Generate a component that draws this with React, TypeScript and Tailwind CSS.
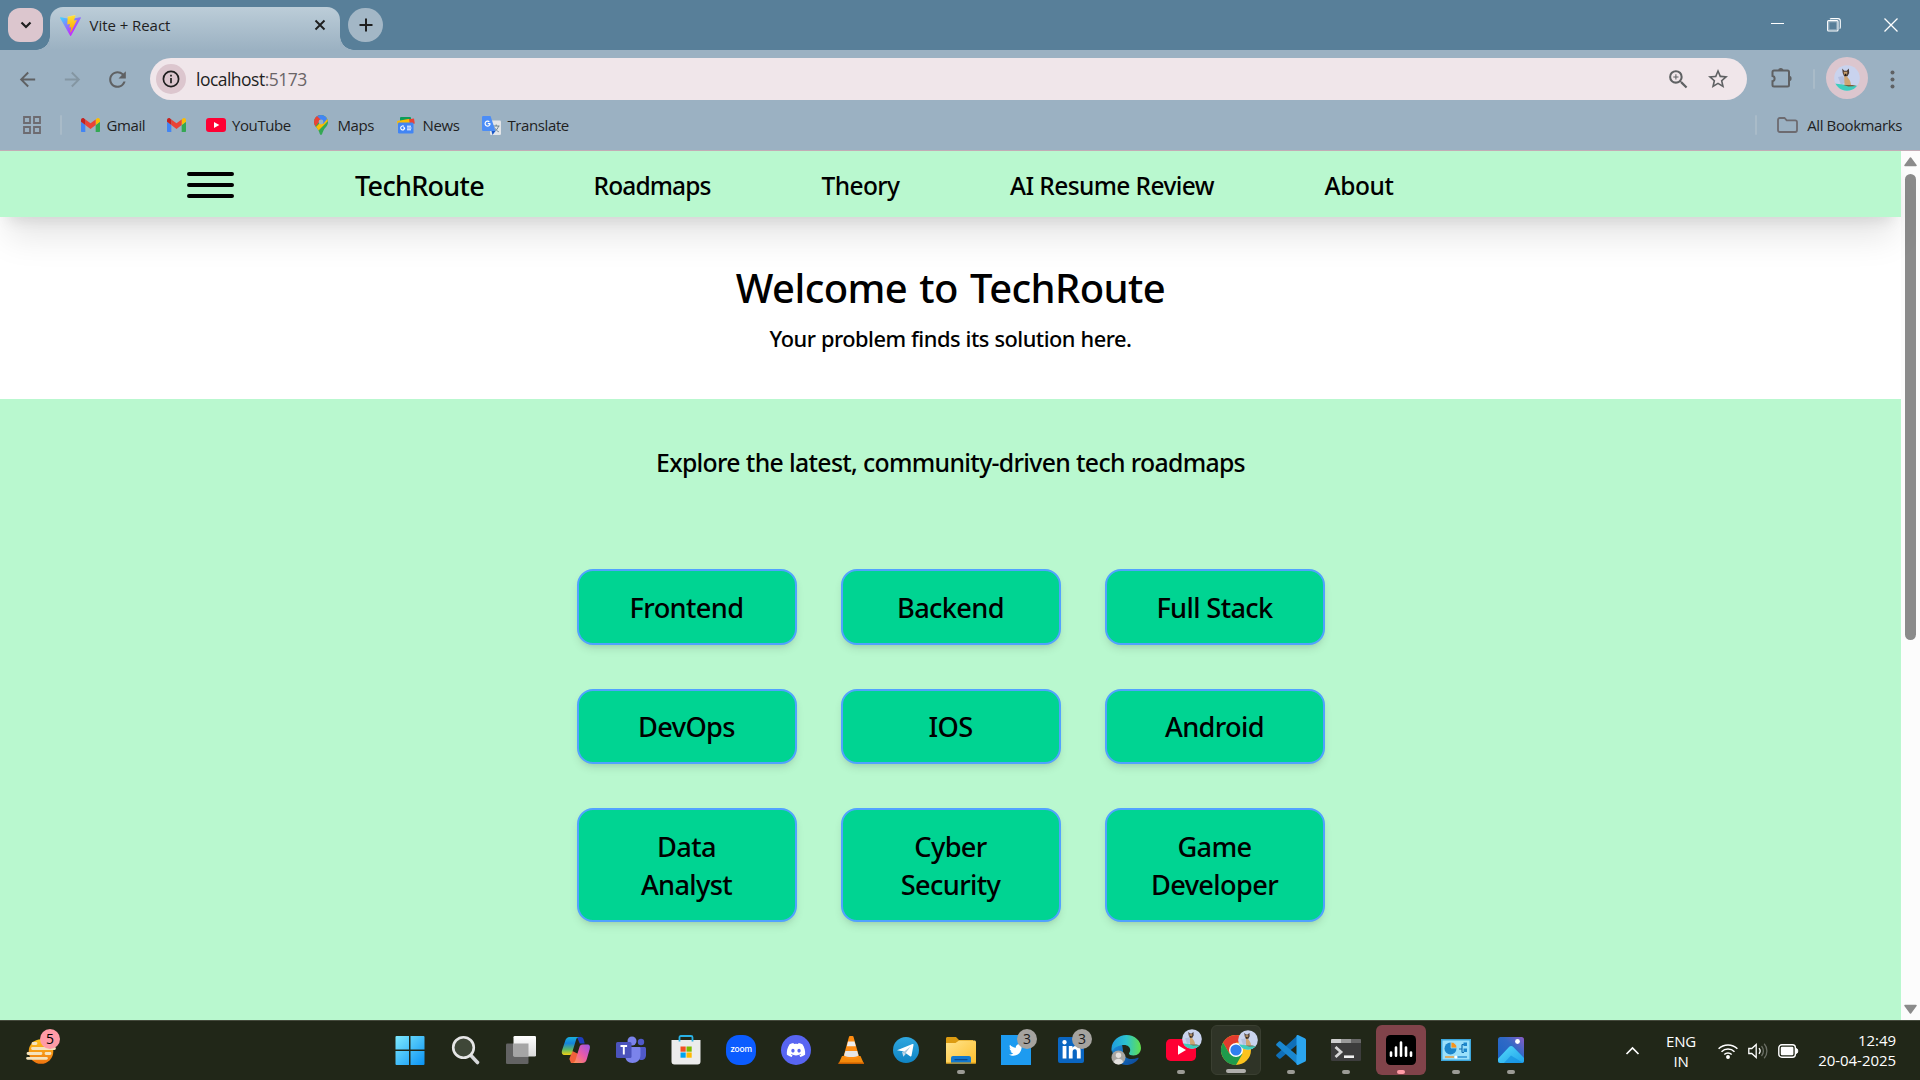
import React from 'react';
import { FaDiscord, FaTwitter, FaLinkedinIn } from 'react-icons/fa';
import { MdArrowBack, MdArrowForward, MdRefresh, MdStarBorder, MdZoomIn } from 'react-icons/md';

/* ---------- browser icons ---------- */

const ViteLogo = () => (
  <svg width="21" height="21" viewBox="0 0 256 257">
    <defs>
      <linearGradient id="viteA" x1="-.8%" x2="57.6%" y1="7.7%" y2="78.4%">
        <stop offset="0%" stopColor="#41D1FF" />
        <stop offset="100%" stopColor="#BD34FE" />
      </linearGradient>
      <linearGradient id="viteB" x1="43.4%" x2="50.3%" y1="2.2%" y2="89%">
        <stop offset="0%" stopColor="#FFEA83" />
        <stop offset="8.3%" stopColor="#FFDD35" />
        <stop offset="100%" stopColor="#FFA800" />
      </linearGradient>
    </defs>
    <path fill="url(#viteA)" d="M255.153 37.938 134.897 252.976c-2.483 4.44-8.862 4.466-11.382.048L.875 37.958c-2.746-4.814 1.371-10.646 6.827-9.67l120.385 21.517a6.537 6.537 0 0 0 2.322-.004l117.867-21.483c5.438-.991 9.574 4.796 6.877 9.62Z" />
    <path fill="url(#viteB)" d="M185.432.063 96.44 17.501a3.268 3.268 0 0 0-2.634 3.014l-5.474 92.456a3.268 3.268 0 0 0 3.997 3.378l24.777-5.718c2.318-.535 4.413 1.507 3.936 3.838l-7.361 36.047c-.495 2.426 1.782 4.5 4.151 3.78l15.304-4.649c2.372-.72 4.652 1.36 4.15 3.788l-11.698 56.621c-.732 3.542 3.979 5.473 5.943 2.437l1.313-2.028 72.516-144.72c1.215-2.423-.88-5.186-3.54-4.672l-25.505 4.922c-2.396.462-4.435-1.77-3.759-4.114l16.646-57.705c.677-2.35-1.37-4.583-3.769-4.113Z" />
  </svg>
);

const GmailIcon = () => (
  <svg width="19" height="14.5" viewBox="52 42 88 66">
    <path fill="#4285f4" d="M58 108h14V74L52 59v43c0 3.32 2.69 6 6 6" />
    <path fill="#34a853" d="M120 108h14c3.32 0 6-2.69 6-6V59l-20 15" />
    <path fill="#fbbc04" d="M120 48v26l20-15v-8c0-7.42-8.47-11.65-14.4-7.2" />
    <path fill="#ea4335" d="M72 74V48l24 18 24-18v26L96 92" />
    <path fill="#c5221f" d="M52 51v8l20 15V48l-5.600-4.200c-5.940-4.450-14.400-.220-14.400 7.200" />
  </svg>
);

const YouTubeIcon = ({ w = 20, h = 14 }: { w?: number; h?: number }) => (
  <svg width={w} height={h} viewBox="0 0 30 21" preserveAspectRatio="none">
    <rect width="30" height="21" rx="4.500" fill="#ff0033" />
    <path d="M12 6v9l8-4.500z" fill="#fff" />
  </svg>
);

const MapsIcon = () => (
  <svg width="14" height="20" viewBox="0 0 14 20">
    <defs>
      <clipPath id="pin">
        <path d="M7 0a7 7 0 0 1 7 7c0 3.500-2.300 5-4 7.500C8.500 17 8.300 20 7 20s-1.500-3-3-5.500C2.300 12 0 10.500 0 7a7 7 0 0 1 7-7z" />
      </clipPath>
    </defs>
    <g clipPath="url(#pin)">
      <rect width="14" height="20" fill="#34a853" />
      <path d="M0 14 14 0v6L3 17z" fill="#fbbc04" />
      <path d="M0 0h5l3 3-7 9-3-3z" fill="#ea4335" />
      <path d="M3 0h11v3l-5 6-6-6z" fill="#4285f4" />
      <path d="M0 2l2.500-1.500L7 5 1 11z" fill="#ea4335" />
    </g>
    <circle cx="7" cy="7" r="2.400" fill="#9bb1c2" />
  </svg>
);

const NewsIcon = () => (
  <svg width="18" height="17" viewBox="0 0 18 17">
    <rect x="3" y="0" width="11" height="8" rx="1" fill="#0c9d58" />
    <path d="M6 3l11-1.500.8 5-10 2z" fill="#ea4335" />
    <path d="M0 4l12-2 1 6-12 1z" fill="#fbbc04" />
    <rect x="1" y="5.500" width="15.500" height="11" rx="1.300" fill="#4285f4" />
    <path d="M8 10.900H6.200M7.700 11a2 2 0 1 1-.7-1.600" stroke="#fff" strokeWidth="1.100" fill="none" />
    <path d="M10 9.200h4M10 11h4.500M10 12.800h4" stroke="#fff" strokeWidth="1" />
  </svg>
);

const TranslateIcon = () => (
  <svg width="19" height="19" viewBox="0 0 19 19">
    <rect x="8" y="4.500" width="11" height="14.500" rx="1.300" fill="#e3e5e8" />
    <path d="M11 10h6.500M14.200 8.500V10M16.500 10c-.5 2.500-2.500 4.500-4 5.500M12.500 11.500c1 2 2.500 3.500 4.300 4.300" stroke="#6f8590" strokeWidth="1" fill="none" />
    <path d="M9.500 15h4L10.500 19z" fill="#1a56c4" />
    <path d="M1.300 0h7.200L13.500 15H1.300A1.300 1.300 0 0 1 0 13.700V1.300A1.300 1.300 0 0 1 1.300 0z" fill="#4c8df6" />
    <path d="M8.400 7.700H5.800M8.100 7.700a2.500 2.500 0 1 1-.8-1.900" stroke="#fff" strokeWidth="1.200" fill="none" />
  </svg>
);

const DogAvatar = ({ size }: { size: number }) => (
  <svg width={size} height={size} viewBox="0 0 26 26">
    <defs>
      <clipPath id="dogClip">
        <circle cx="13" cy="13" r="12.800" />
      </clipPath>
    </defs>
    <g clipPath="url(#dogClip)">
      <rect width="26" height="26" fill="#c9d3ee" />
      <path d="M4 12l5-1 3 6-5 3z" fill="#b2bfe0" />
      <path d="M0 18.500l13 1.500 13 1v5H0z" fill="#3ecdbd" />
      <path d="M8.200 3.500l2 2.300h2.600l2-2.300.4 4.500-1.700 3.300h-3.400L8.700 8z" fill="#4a3b34" />
      <path d="M9.600 6.800h3.800l-.5 3.400h-2.800z" fill="#c9a06c" />
      <path d="M10.600 8.800h1.900v3h-1.900z" fill="#211a18" />
      <path d="M10.200 11.300h2.600c1.600 2.200 4 4.200 4.200 8.700h-6.500z" fill="#cfa673" />
      <path d="M9.500 20h9l4 1-8 .5z" fill="#7d5c3c" />
    </g>
  </svg>
);

/* ---------- taskbar icons, drawn on a 30x30 box ---------- */

const Box = ({ children }: { children: React.ReactNode }) => (
  <svg width="30" height="30" viewBox="0 0 30 30" className="overflow-visible">{children}</svg>
);

const StartIcon = () => (
  <Box>
    <defs>
      <linearGradient id="win" x1="0" y1="0" x2="1" y2="1" gradientUnits="objectBoundingBox">
        <stop offset="0" stopColor="#7ee9fd" />
        <stop offset="1" stopColor="#0a93f5" />
      </linearGradient>
    </defs>
    <path transform="translate(-1.500 0)" d="M1 2a1 1 0 0 1 1-1h12.500v13.500H1zM16 1h13a1 1 0 0 1 1 1v12.500H16zM1 16h13.500v14H2a1 1 0 0 1-1-1zM16 16h14v13a1 1 0 0 1-1 1H16z" fill="url(#win)" />
  </Box>
);
const SearchIcon = () => (
  <Box>
    <path d="M19.500 20l7 7.500" stroke="#d6d8da" strokeWidth="3.600" strokeLinecap="round" />
    <circle cx="12.500" cy="12.500" r="10.300" fill="#3f4738" stroke="#e6e6e6" strokeWidth="2.600" />
  </Box>
);
const TaskViewIcon = () => (
  <Box>
    <defs>
      <linearGradient id="tv" x1="0" y1="0" x2="0" y2="1">
        <stop offset="0" stopColor="#fff" />
        <stop offset="1" stopColor="#d9d9d9" />
      </linearGradient>
    </defs>
    <rect x="0" y="8.500" width="22.500" height="20.500" rx="1.300" fill="#636363" />
    <rect x="7.500" y="1" width="22.500" height="20.500" rx="1.300" fill="url(#tv)" />
    <rect x="7.500" y="8.500" width="15" height="13" fill="#a5a5a5" />
  </Box>
);
const CopilotIcon = () => (
  <Box>
    <defs>
      <linearGradient id="cpA" x1="0" y1="0" x2="0" y2="1">
        <stop offset="0" stopColor="#18b0dc" />
        <stop offset=".35" stopColor="#1583dd" />
        <stop offset=".7" stopColor="#5fb865" />
        <stop offset="1" stopColor="#f4d012" />
      </linearGradient>
      <linearGradient id="cpB" x1="1" y1="0" x2="0" y2="1">
        <stop offset="0" stopColor="#9a55e8" />
        <stop offset=".5" stopColor="#ea5aa8" />
        <stop offset="1" stopColor="#ff9c4a" />
      </linearGradient>
    </defs>
    <path d="M16 2h3.500c2 0 2.800 1.200 3.300 3l.9 3.500h-5z" fill="#1f3fc0" />
    <path d="M10 28h2.500c2 0 2.800-1 3.300-3l1.500-6-6-3-3 8z" fill="#f0603a" />
    <path d="M9 2h9c-2 .3-2.600 1.700-3 3l-4 13c-.4 1.500-1.300 2-3 2H4c-3 0-3.600-2-3-4.500L4 6.500C4.800 3.500 6 2 9 2z" fill="url(#cpA)" />
    <path d="M21 28h-9.500c2-.3 2.600-1.700 3-3l4-13c.4-1.500 1.300-2.500 3-2.500H26c3 0 3.300 2 2.700 4.500L26 23.500c-.8 3-2 4.500-5 4.500z" fill="url(#cpB)" />
  </Box>
);
const TeamsIcon = () => (
  <Box>
    <circle cx="25" cy="7" r="3.200" fill="#5059c9" />
    <path d="M21 12h7.500c.8 0 1.500.7 1.500 1.500V20c0 3-2 5-4.500 5S21 23 21 20z" fill="#5059c9" />
    <circle cx="16" cy="6" r="4.500" fill="#7b83eb" />
    <path d="M9 12h14c.8 0 1.500.7 1.500 1.500V20c0 5-3.500 8-8 8s-7.500-3-7.500-8z" fill="#7b83eb" />
    <rect x="0" y="7" width="15.500" height="16" rx="1.500" fill="#4b53bc" />
    <path d="M4.500 11h6.600M7.800 11v8.500" stroke="#fff" strokeWidth="1.900" />
  </Box>
);
const StoreIcon = () => (
  <Box>
    <path d="M.5 5h29v21.500a3 3 0 0 1-3 3h-23a3 3 0 0 1-3-3z" fill="#ececec" />
    <path d="M8.500 6.500V2.500c0-1 .5-1.500 1.500-1.500h10c1 0 1.500.5 1.500 1.500v4" fill="none" stroke="#29b2e6" strokeWidth="1.800" />
    <path d="M9.500 11.500h5.200v5.200H9.500z" fill="#f25022" />
    <path d="M15.500 11.500h5.200v5.200h-5.200z" fill="#7fba00" />
    <path d="M9.500 17.500h5.200v5.200H9.500z" fill="#00a4ef" />
    <path d="M15.500 17.500h5.200v5.200h-5.200z" fill="#ffb900" />
  </Box>
);
const ZoomAppIcon = () => (
  <div className="flex h-[30px] w-[30px] items-center justify-center rounded-[13px] bg-[#0b5cff]">
    <span className="pb-[2px] font-['Inter'] text-[8.500px] font-medium leading-none tracking-[-0.200px] text-white">zoom</span>
  </div>
);
const DiscordIcon = () => (
  <div className="flex h-[30px] w-[30px] items-center justify-center rounded-full bg-[#5865f2]">
    <FaDiscord className="text-[20px] text-white" />
  </div>
);
const VlcIcon = () => (
  <Box>
    <path d="M6 21h18.500l3.500 8H2.500z" fill="#f58a0b" />
    <path d="M2.500 27.500h25.500v1.500H2.500z" fill="#c85f00" />
    <path d="M14 1h2.500c.6 0 .9.400 1 .8L23 21.500c-3 3.500-12.500 3.500-15.500 0L13 1.800c.1-.4.400-.8 1-.8z" fill="#ff8d12" />
    <path d="M12 6.500h6.500l1.300 4.800h-9z" fill="#eee" />
    <path d="M9.400 16h11.800l1.300 4.500c-3 2-11.400 2-14.400 0z" fill="#e6e6e6" />
  </Box>
);
const TelegramIcon = () => (
  <Box>
    <defs>
      <linearGradient id="tg" x1="0" y1="0" x2="0" y2="1">
        <stop offset="0" stopColor="#2fa7df" />
        <stop offset="1" stopColor="#0f84c4" />
      </linearGradient>
    </defs>
    <circle cx="15" cy="15" r="13" fill="url(#tg)" />
    <path d="M6 15.300 21.500 9c.7-.3 1.200.2 1 .9l-2 10.800c-.2.800-.8 1-1.400.5L12 16.300z" fill="#fff" />
    <path d="M11 16.500l1.300 5.200 2.600-3z" fill="#c8daea" />
    <path d="M12 17.500l7.500-6-5.300 7.200z" fill="#a9c9dd" />
  </Box>
);
const ExplorerIcon = () => (
  <Box>
    <defs>
      <linearGradient id="fe" x1="0" y1="0" x2="1" y2="1">
        <stop offset="0" stopColor="#ffe48c" />
        <stop offset="1" stopColor="#fdbf2d" />
      </linearGradient>
    </defs>
    <path d="M0 3.500C0 2.500.7 2 1.500 2H10l3 3h14v6H0z" fill="#dc9c12" />
    <path d="M0 9.500V8h9.500L13 5.500h15.500c.8 0 1.500.600 1.500 1.500v20.500c0 .600-.500 1-1 1H1c-.600 0-1-.4-1-1z" fill="url(#fe)" />
    <path d="M5 28.500V23a2 2 0 0 1 2-2h16a2 2 0 0 1 2 2v5.500z" fill="#1179cf" />
    <path d="M9 24.600h12" stroke="#0a4a8f" strokeWidth="1.300" strokeLinecap="round" />
    <path d="M0 28h30" stroke="#dfa016" strokeWidth="1" />
  </Box>
);
const TwitterIcon = () => (
  <div className="flex h-[30px] w-[30px] items-center justify-center bg-[#1d9bf0]">
    <FaTwitter className="text-[14px] text-white" />
  </div>
);
const LinkedInIcon = () => (
  <div className="flex h-[26px] w-[26px] items-center justify-center rounded-[2px] bg-[#0a66c2]">
    <FaLinkedinIn className="text-[21px] text-white" />
  </div>
);
const EdgeIcon = () => (
  <Box>
    <defs>
      <linearGradient id="edA" x1="0" y1="0" x2="1" y2="0">
        <stop offset="0" stopColor="#1f9be0" />
        <stop offset=".5" stopColor="#2cc3d0" />
        <stop offset="1" stopColor="#62e04c" />
      </linearGradient>
      <linearGradient id="edB" x1="0" y1="0" x2="1" y2="1">
        <stop offset="0" stopColor="#1b8fdc" />
        <stop offset="1" stopColor="#0c4596" />
      </linearGradient>
    </defs>
    <path d="M2 11C-.5 19 4 29.500 15 30c5.500 0 10-2.500 12.500-6.500.3-.6-.2-1-.7-.7-8 3.500-15.800-.8-14.800-7.300L11 9z" fill="url(#edB)" />
    <path d="M.5 13.500C1 5.500 7.500 0 15.500 0 24 0 30 6 30 13c0 4.500-3.300 7.500-7.500 7.500-3 0-4.500-1-4.500-2 0-.8 1.200-1.300 1.200-3.500 0-2.800-2.500-5-6-5C8 10 3 12 1 17c-.5-1-.6-2.300-.5-3.500z" fill="url(#edA)" />
    <circle cx="7.500" cy="22.500" r="7" fill="#a8a6a2" />
    <circle cx="7.500" cy="20.300" r="2.700" fill="#e4e2df" />
    <path d="M3 27.500c0-5 9-5 9 0-2.500 2.500-6.500 2.500-9 0z" fill="#e4e2df" />
  </Box>
);
const ChromeIcon = () => (
  <Box>
    <circle cx="15" cy="15" r="15" fill="#fcc31e" />
    <path d="M2 7.500A15 15 0 0 1 28 7.500H15L8.500 18.700z" fill="#e33b2e" />
    <path d="M2 7.500A15 15 0 0 0 15 30l6.500-11.200H8.500z" fill="#1f9a4c" />
    <circle cx="15" cy="15" r="7" fill="#fff" />
    <circle cx="15" cy="15" r="5.600" fill="#2f7fee" />
  </Box>
);
const VsCodeIcon = () => (
  <Box>
    <path d="M22 0v9L4.500 23.500c-.5.400-1.200.400-1.600 0L.5 21.200c-.5-.5-.5-1.300 0-1.800z" fill="#0f6fb8" />
    <path d="M22 30v-9L4.500 6.500c-.5-.4-1.200-.4-1.600 0L.5 8.800c-.5.5-.5 1.300 0 1.800z" fill="#1a87d0" />
    <path d="M22 0l6.800 3.200c.8.400 1.200 1 1.200 1.900v19.800c0 .9-.4 1.500-1.200 1.900L22 30c-.9.300-1.500 0-1.500-1V1c0-1 .6-1.300 1.500-1z" fill="#2ba5ef" />
  </Box>
);
const TerminalIcon = () => (
  <Box>
    <rect x="0" y="4" width="30" height="22" rx="1.300" fill="#3d3d3d" />
    <path d="M0 5.300C0 4.500.5 4 1.300 4H10v4H0z" fill="#cfcfcf" />
    <path d="M10 4h10v4H10z" fill="#9a9a9a" />
    <path d="M20 4h8.700c.8 0 1.300.5 1.300 1.300V8H20z" fill="#686868" />
    <path d="M4.500 12l5.500 5-5.500 5" fill="none" stroke="#d6d6d6" strokeWidth="2.800" />
    <path d="M13 21.700h10" stroke="#f2f2f2" strokeWidth="2.600" />
  </Box>
);
const AudioIcon = () => (
  <Box>
    <rect width="30" height="30" rx="4.500" fill="#000" />
    <path d="M5 17.500v3.200M10 12.500v8.200M15 7.500v13.200M20 12.500v8.200M25 17.500v3.200" stroke="#fff" strokeWidth="2.600" strokeLinecap="round" />
  </Box>
);
const ControlPanelIcon = () => (
  <Box>
    <rect x="0" y="4" width="30" height="22" fill="#3da7dc" />
    <rect x="1.500" y="5.500" width="27" height="19" fill="#9be0fb" />
    <circle cx="9.500" cy="13.500" r="6" fill="#1c86cc" />
    <path d="M10 13V7a6 6 0 0 1 6 6z" fill="#f7941d" stroke="#9be0fb" strokeWidth=".8" />
    <path d="M18 14h3M21 9.500v8M21 9.500h2M21 17.500h2" stroke="#136fb0" strokeWidth="1.200" fill="none" />
    <rect x="22.500" y="7.500" width="3.500" height="3.500" fill="#1c86cc" />
    <rect x="22.500" y="13.500" width="3.500" height="3.500" fill="#1c86cc" />
    <path d="M4 22h9" stroke="#f7941d" strokeWidth="1.300" />
    <path d="M16 22h10" stroke="#1c86cc" strokeWidth="1.300" />
    <circle cx="15" cy="22" r="1.600" fill="#fff" />
  </Box>
);
const PhotosIcon = () => (
  <Box>
    <defs>
      <linearGradient id="phA" x1="0" y1="1" x2="1" y2="0">
        <stop offset="0" stopColor="#1762c4" />
        <stop offset=".6" stopColor="#3069c6" />
        <stop offset="1" stopColor="#8a5cc4" />
      </linearGradient>
      <linearGradient id="phB" x1="0" y1="0" x2="1" y2="1">
        <stop offset="0" stopColor="#58dcfb" />
        <stop offset="1" stopColor="#179be9" />
      </linearGradient>
      <clipPath id="phC">
        <rect x="2" y="2" width="26" height="26" rx="2.500" />
      </clipPath>
    </defs>
    <g clipPath="url(#phC)">
      <rect x="2" y="2" width="26" height="26" fill="url(#phA)" />
      <path d="M0 26 13 12c1.300-1.400 3-1.400 4.300 0L31 26v5H0z" fill="url(#phB)" />
      <path d="M15 20.500 7 29h22z" fill="#1089dd" opacity=".6" />
      <circle cx="21.500" cy="6.500" r="2.400" fill="#fff" />
    </g>
  </Box>
);

const CountBadge = ({ n }: { n: string }) => (
  <span className="absolute right-[-6px] top-[-6px] flex h-5 w-5 items-center justify-center rounded-full bg-[#a5a39f] text-[14px] leading-none text-[#1b1b1b]">{n}</span>
);
const ProfileBadge = () => (
  <span className="absolute right-[-6px] top-[-6px]"><DogAvatar size={20} /></span>
);

type TaskApp = { icon: React.ReactNode; badge?: React.ReactNode; mark?: string; tile?: string };

const dot = 'h-1 w-2 bg-[#9b9b95]';
const apps: TaskApp[] = [
  { icon: <StartIcon /> },
  { icon: <SearchIcon /> },
  { icon: <TaskViewIcon /> },
  { icon: <CopilotIcon /> },
  { icon: <TeamsIcon /> },
  { icon: <StoreIcon /> },
  { icon: <ZoomAppIcon /> },
  { icon: <DiscordIcon /> },
  { icon: <VlcIcon /> },
  { icon: <TelegramIcon /> },
  { icon: <ExplorerIcon />, mark: dot },
  { icon: <TwitterIcon />, badge: <CountBadge n="3" /> },
  { icon: <LinkedInIcon />, badge: <CountBadge n="3" /> },
  { icon: <EdgeIcon /> },
  { icon: <YouTubeIcon w={30} h={22} />, badge: <ProfileBadge />, mark: dot },
  { icon: <ChromeIcon />, badge: <ProfileBadge />, mark: 'h-1 w-5 bg-[#b0afac]', tile: 'border border-[#3a3f31] bg-[#2f3427]' },
  { icon: <VsCodeIcon />, mark: dot },
  { icon: <TerminalIcon />, mark: dot },
  { icon: <AudioIcon />, mark: 'h-1 w-2 bg-[#ff9ba6]', tile: 'bg-[#81434a]' },
  { icon: <ControlPanelIcon />, mark: dot },
  { icon: <PhotosIcon />, mark: dot },
];

/* ---------- browser chrome ---------- */

const TabStrip = () => (
  <div className="flex h-[50px] shrink-0 bg-[#587f99]">
    <button className="ml-2 mt-2 flex h-[34px] w-[35px] items-center justify-center rounded-xl bg-[#dcc6ce]">
      <svg width="12" height="8" viewBox="0 0 12 8"><path d="M1.500 1.500 6 6l4.500-4.500" fill="none" stroke="#1f1f1f" strokeWidth="2.200" /></svg>
    </button>
    <div className="relative ml-[7px] mt-[7px] flex h-[43px] w-[290px] items-center rounded-t-[13px] bg-linear-to-b from-[#bccdd8] to-[#9bb1c2] pb-[7px] pl-[10px] pr-[14px]">
      <span className="absolute bottom-0 left-[-14px] h-[14px] w-[14px] bg-[radial-gradient(circle_at_0_0,transparent_13.500px,#9bb1c2_14px)]" />
      <span className="absolute bottom-0 right-[-14px] h-[14px] w-[14px] bg-[radial-gradient(circle_at_100%_0,transparent_13.500px,#9bb1c2_14px)]" />
      <ViteLogo />
      <span className="ml-[8.500px] flex-1 text-[15px] tracking-[-0.050px] text-[#1f1f1f]">Vite + React</span>
      <svg width="12" height="12" viewBox="0 0 12 12"><path d="M1.500 1.500l9 9M10.500 1.500l-9 9" stroke="#1f1f1f" strokeWidth="1.900" /></svg>
    </div>
    <button className="ml-2 mt-2 flex h-[34px] w-[35px] items-center justify-center rounded-full bg-[#a3b7c6]">
      <svg width="14" height="14" viewBox="0 0 14 14"><path d="M7 .5v13M.5 7h13" stroke="#1f1f1f" strokeWidth="2" /></svg>
    </button>
    <div className="ml-auto flex items-center">
      <svg width="13" height="14" viewBox="0 0 13 14"><path d="M0 5.500h13" stroke="#fff" strokeWidth="1" /></svg>
      <svg className="ml-[43px]" width="14" height="14" viewBox="0 0 14 14" fill="none" stroke="#fff" strokeWidth="1.100">
        <rect x="1.800" y="3.800" width="8" height="8" stroke="#8fabbc" strokeWidth="1.200" />
        <rect x=".6" y="2.600" width="10.400" height="10.400" rx="1" />
        <path d="M3 1.200c.3-.4.800-.6 1.500-.6H11c1.300 0 2.300 1 2.300 2.300V9c0 .8-.2 1.300-.6 1.600" />
      </svg>
      <svg className="ml-[43px] mr-[22px]" width="14" height="14" viewBox="0 0 14 14"><path d="M.5.5l13 13M13.500.5l-13 13" stroke="#fff" strokeWidth="1.300" /></svg>
    </div>
  </div>
);

const AddressBar = () => (
  <div className="mt-2 flex h-[42px] items-center text-[#5f6163]">
    <MdArrowBack className="ml-[16px] text-[23px]" />
    <MdArrowForward className="ml-[22px] text-[23px] text-[#8496a2]" />
    <MdRefresh className="ml-[21px] text-[25px]" />
    <div className="ml-[20px] flex h-[42px] w-[1597px] items-center rounded-full bg-[#f0e6ea]">
      <span className="ml-[6px] flex h-[30px] w-[30px] items-center justify-center rounded-full bg-[#dcc6ce]">
        <svg width="18" height="18" viewBox="0 0 18 18"><circle cx="9" cy="9" r="7.600" fill="none" stroke="#1f1f1f" strokeWidth="1.700" /><path d="M9 8v5.200M9 4.800v1.800" stroke="#1f1f1f" strokeWidth="1.700" /></svg>
      </span>
      <span className="ml-[10px] text-[17.500px] tracking-[-0.520px] text-[#1f1f1f]">localhost<span className="text-[#6a6467]">:5173</span></span>
      <MdZoomIn className="ml-auto text-[25px]" />
      <MdStarBorder className="ml-[15px] mr-[17px] text-[24px]" />
    </div>
    <svg className="ml-[24px] mt-[-4px]" width="21" height="21" viewBox="0 0 21 21">
      <path d="M1.500 5c0-1 .600-1.500 1.500-1.500h13.500c.9 0 1.500.6 1.500 1.500v13c0 .9-.6 1.500-1.500 1.500H3c-.9 0-1.500-.6-1.500-1.500v-3.800c2.800-.4 2.800-4.900 0-5.300z" fill="none" stroke="#5f6163" strokeWidth="2" />
      <path d="M7.200 3.500a2.600 2.600 0 0 1 5.200 0zM18 8.800a2.600 2.600 0 0 1 0 5.200z" fill="#5f6163" />
    </svg>
    <span className="ml-[21px] h-[20px] w-[2px] rounded bg-[#a9bbc8]" />
    <span className="ml-[11px] mt-[-2px] flex h-[42px] w-[42px] items-center justify-center rounded-full bg-[#dcc6ce]"><DogAvatar size={26} /></span>
    <svg className="ml-[22px]" width="5" height="19" viewBox="0 0 5 19" fill="#5f6163"><circle cx="2.500" cy="2.500" r="2" /><circle cx="2.500" cy="9.500" r="2" /><circle cx="2.500" cy="16.500" r="2" /></svg>
  </div>
);

const Bookmark = ({ w, icon, label }: { w: string; icon: React.ReactNode; label?: string }) => (
  <div className={'flex items-center ' + w}>
    <span className="flex w-[20px] shrink-0 justify-center">{icon}</span>
    {label && <span className="ml-[6.500px]">{label}</span>}
  </div>
);

const BookmarksBar = () => (
  <div className="flex h-[50px] items-center text-[15px] tracking-[-0.400px] text-[#1f1f1f]">
    <svg className="ml-[23px]" width="18" height="18" viewBox="0 0 18 18" fill="none" stroke="#6d6b70" strokeWidth="1.800">
      <path d="M1 1h6v6H1zM11 1h6v6h-6zM1 11h6v6H1zM11 11h6v6h-6z" />
    </svg>
    <span className="ml-[19px] mr-[18px] h-[20px] w-[2px] rounded bg-[#a9bbc8]" />
    <Bookmark w="w-[86px]" icon={<GmailIcon />} label="Gmail" />
    <Bookmark w="w-[39.500px]" icon={<GmailIcon />} />
    <Bookmark w="w-[105.500px]" icon={<YouTubeIcon />} label="YouTube" />
    <Bookmark w="w-[85px]" icon={<MapsIcon />} label="Maps" />
    <Bookmark w="w-[85px]" icon={<NewsIcon />} label="News" />
    <Bookmark w="w-[100px]" icon={<TranslateIcon />} label="Translate" />
    <span className="ml-auto h-[20px] w-[2px] rounded bg-[#a9bbc8]" />
    <svg className="ml-[20px]" width="21" height="16" viewBox="0 0 21 16"><path d="M1 3c0-1.200.6-2 1.800-2h4.700l2.200 2.400h8.500c1.200 0 1.800.6 1.800 1.800V13c0 1.200-.6 2-1.800 2H2.800C1.600 15 1 14.200 1 13z" fill="none" stroke="#6d6b70" strokeWidth="1.800" /></svg>
    <span className="ml-[9px] mr-[18px]">All Bookmarks</span>
  </div>
);

/* ---------- web page ---------- */

const NavBar = () => (
  <nav className="relative flex h-[66px] shrink-0 items-center bg-[#b9f8cf] pl-[187px] pt-[2px] font-['Noto_Sans','Open_Sans',sans-serif] text-[24.500px] font-medium tracking-[-0.600px] text-black shadow-[0_27px_34px_-7px_rgb(0_0_0/0.1),0_11px_14px_-8px_rgb(0_0_0/0.1)]">
    <svg className="mr-[121px]" width="47" height="28" viewBox="0 0 47 28"><path d="M2 3h43M2 14h43M2 25h43" stroke="#000" strokeWidth="4" strokeLinecap="round" /></svg>
    <span className="w-[238.500px] pt-[3px] text-[27px] tracking-[-0.700px]">TechRoute</span>
    <span className="w-[228px] pt-[3px] tracking-[-0.850px]">Roadmaps</span>
    <span className="w-[188.500px] pt-[3px]">Theory</span>
    <span className="w-[314.500px] pt-[3px]">AI Resume Review</span>
    <span className="pt-[3px] tracking-[-0.400px]">About</span>
  </nav>
);

const rowsOfRoles: { h: string; roles: string[] }[] = [
  { h: 'h-[76px] pt-[2px]', roles: ['Frontend', 'Backend', 'Full Stack'] },
  { h: 'h-[75px]', roles: ['DevOps', 'IOS', 'Android'] },
  { h: 'h-[114px] pt-[2px]', roles: ['Data Analyst', 'Cyber Security', 'Game Developer'] },
];

const Page = () => (
  <main className="flex flex-1 flex-col bg-white font-['Noto_Sans','Open_Sans',sans-serif] font-medium text-black">
    <NavBar />
    <section className="flex h-[182px] shrink-0 flex-col items-center pt-[43px]">
      <h1 className="text-[40px] leading-[56px] tracking-[-0.600px] [word-spacing:2.400px]">Welcome to TechRoute</h1>
      <p className="mt-[7px] text-[21.800px] leading-[32px] tracking-[-0.510px] [word-spacing:0.400px]">Your problem finds its solution here.</p>
    </section>
    <section className="flex flex-1 flex-col items-center bg-[#b9f8cf] pt-[45px]">
      <p className="text-[24.800px] leading-[36px] tracking-[-0.690px] [word-spacing:0.200px]">Explore the latest, community-driven tech roadmaps</p>
      <div className="mt-[89px] flex flex-col gap-[44px]">
        {rowsOfRoles.map((row) => (
          <div key={row.h} className="flex gap-[44px]">
            {row.roles.map((r) => (
              <button key={r} className={'flex w-[220px] items-center justify-center rounded-[16px] border-2 border-[#51a2ff] bg-[#00d492] px-10 text-center text-[27.200px] leading-[38px] tracking-[-0.640px] shadow-[0_5px_8px_-1px_rgb(0_0_0/0.1),0_3px_5px_-3px_rgb(0_0_0/0.1)] ' + row.h}>
                {r.includes('Stack') ? <span className="whitespace-nowrap">{r}</span> : r}
              </button>
            ))}
          </div>
        ))}
      </div>
    </section>
  </main>
);

const Scrollbar = () => (
  <div className="flex w-[19px] shrink-0 flex-col items-center bg-[#fcfcfc] pb-[6px] pt-[6px]">
    <svg width="13" height="10" viewBox="0 0 13 10"><path d="M6.500 1 12 8.500H1z" fill="#8b8b8b" stroke="#8b8b8b" strokeWidth="1.500" strokeLinejoin="round" /></svg>
    <div className="mt-[7px] h-[466px] w-[11px] rounded-full bg-[#8b8b8b]" />
    <svg className="mt-auto" width="13" height="10" viewBox="0 0 13 10"><path d="M6.500 9 12 1.500H1z" fill="#8b8b8b" stroke="#8b8b8b" strokeWidth="1.500" strokeLinejoin="round" /></svg>
  </div>
);

/* ---------- taskbar ---------- */

const Weather = () => (
  <div className="relative ml-[26px] h-[60px] w-[40px]">
    <svg className="mt-[18px]" width="32" height="27" viewBox="0 0 32 27">
      <defs>
        <linearGradient id="sun" x1="0" y1="0" x2="0" y2="1">
          <stop offset="0" stopColor="#fdc31c" />
          <stop offset="1" stopColor="#ef7410" />
        </linearGradient>
      </defs>
      <circle cx="15" cy="12.500" r="12.300" fill="url(#sun)" />
      <path d="M7 4.500h3M6.500 9.500h22M2 14.500h13M20 14.500h4M1.500 19.300h19" stroke="#f4e3bd" strokeWidth="2.800" strokeLinecap="round" />
    </svg>
    <span className="absolute left-[14px] top-[8px] flex h-5 w-5 items-center justify-center rounded-full bg-[#ff9ba6] text-[14px] leading-none text-black">5</span>
  </div>
);

const Tray = () => (
  <div className="ml-auto flex h-[60px] items-center text-[15px] leading-[20px] text-white">
    <svg width="15" height="10" viewBox="0 0 15 10"><path d="M1.500 8 7.500 2l6 6" fill="none" stroke="#fff" strokeWidth="1.700" /></svg>
    <div className="ml-[23px] w-[36px] pb-px text-center tracking-[-0.200px]">ENG<br />IN</div>
    <svg className="ml-[19px]" width="20" height="16" viewBox="0 0 20 16" fill="none" stroke="#fff" strokeWidth="1.500">
      <path d="M.6 5.800a13.300 13.300 0 0 1 18.800 0" />
      <path d="M3.500 8.700a9.200 9.200 0 0 1 13 0" />
      <path d="M6.300 11.500a5.300 5.300 0 0 1 7.400 0" />
      <circle cx="10" cy="14" r="1.200" fill="#fff" />
    </svg>
    <svg className="ml-[10px]" width="21" height="18" viewBox="0 0 21 18" fill="none" strokeWidth="1.300">
      <path d="M.8 6.500h3L8.200 2.500v13l-4.400-4h-3z" stroke="#fff" />
      <path d="M11 6.200c1.300 1.600 1.300 4 0 5.600" stroke="#fff" />
      <path d="M13.500 4c2.500 2.900 2.500 7.100 0 10M16.200 1.800c3.600 4 3.600 10.400 0 14.400" stroke="#6b6f65" />
    </svg>
    <svg className="ml-[9px]" width="21" height="14" viewBox="0 0 21 14">
      <rect x=".8" y=".8" width="16.600" height="12.400" rx="3" fill="none" stroke="#fff" strokeWidth="1.400" />
      <rect x="2.800" y="2.800" width="12.600" height="8.400" rx="1.200" fill="#fff" />
      <path d="M18.500 4.500c1.700.3 1.700 4.700 0 5z" fill="#fff" stroke="#fff" />
    </svg>
    <div className="mb-[3px] ml-[15px] mr-[24px] w-[82px] text-right tracking-[-0.050px]">12:49<br />20-04-2025</div>
  </div>
);

const Taskbar = () => (
  <footer className="flex h-[60px] shrink-0 border-t border-[#454a3c] bg-[#212718]">
    <Weather />
    <div className="ml-[317.500px] flex">
      {apps.map((a, i) => (
        <div key={i} className="flex w-[55px] justify-center pt-[4px]">
          <div className={'relative flex h-[50px] w-[50px] items-center justify-center rounded-[6px] ' + (a.tile ?? '')}>
            <span className="relative flex">{a.icon}</span>
            {a.badge && <span className="absolute left-[10px] top-[10px] h-[30px] w-[30px]">{a.badge}</span>}
            {a.mark && <span className={'absolute bottom-[1px] rounded-full ' + a.mark} />}
          </div>
        </div>
      ))}
    </div>
    <Tray />
  </footer>
);

export default function App() {
  return (
    <div className="flex h-[1080px] w-[1920px] flex-col overflow-hidden font-['Open_Sans','Noto_Sans',sans-serif]">
      <TabStrip />
      <header className="h-[101px] shrink-0 border-b border-[#c3acb6] bg-[#9bb1c2]">
        <div className="flow-root"><AddressBar /></div>
        <BookmarksBar />
      </header>
      <div className="flex min-h-0 flex-1">
        <Page />
        <Scrollbar />
      </div>
      <Taskbar />
    </div>
  );
}
